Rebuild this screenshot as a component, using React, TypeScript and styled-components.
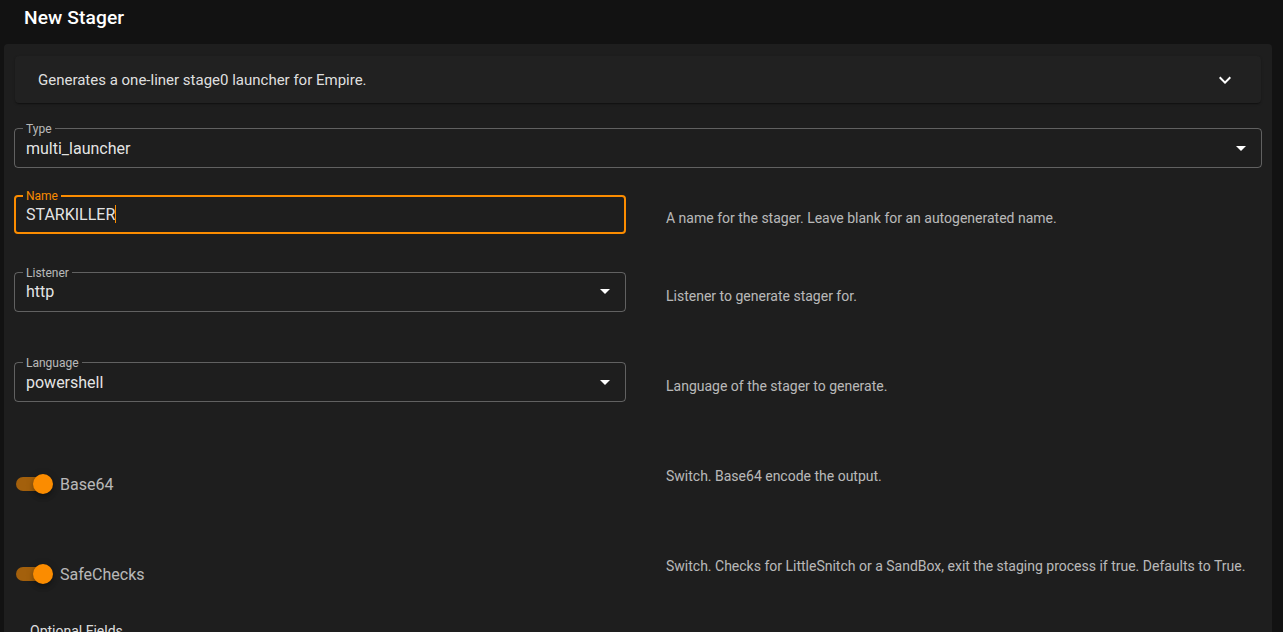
import React from 'react';
import styled, {createGlobalStyle} from 'styled-components';

const orange = '#fb8c00';

const GlobalStyle = createGlobalStyle`
    html, body {
        margin: 0;
        padding: 0;
        background: #121212;
        font-family: Roboto, "Liberation Sans", sans-serif;
        color: #fff;
        overflow: hidden;
    }
`;

const Page = styled.div`
    width: 1283px;
    height: 632px;
    background: #121212;
    overflow: hidden;
`;

const TopBar = styled.header`
    height: 44px;
    display: flex;
    align-items: center;
    padding: 0 24px;
    box-sizing: border-box;
`;

const Title = styled.h1`
    margin: 0;
    font-size: 19.2px;
    font-weight: 500;
    letter-spacing: 0.1px;
    color: #fff;
    padding-bottom: 10px;
`;

const Card = styled.section`
    margin-left: 4px;
    width: 1268px;
    min-height: 600px;
    background: #1e1e1e;
    border-radius: 4px 4px 0 0;
    padding: 12px 10px 0;
    box-sizing: border-box;
`;

const Panel = styled.div`
    margin: 0 1px;
    height: 47px;
    background: #212121;
    border-radius: 4px;
    box-shadow: 0 2px 1px -1px rgba(0, 0, 0, 0.2), 0 1px 1px 0 rgba(0, 0, 0, 0.14), 0 1px 3px 0 rgba(0, 0, 0, 0.12);
    display: flex;
    align-items: center;
    justify-content: space-between;
    padding: 0 30px 0 23px;
    box-sizing: border-box;
`;

const PanelText = styled.span`
    font-size: 15px;
    color: rgba(255, 255, 255, 0.87);
`;

const Field = styled.div<{ $focused?: boolean; $width?: string }>`
    position: relative;
    width: ${p => p.$width || '100%'};
    height: ${p => (p.$focused ? '39px' : '40px')};
    border: ${p => (p.$focused ? `2px solid ${orange}` : '1px solid rgba(255, 255, 255, 0.3)')};
    border-radius: 4px;
    box-sizing: border-box;
    display: flex;
    align-items: center;
    padding: ${p => (p.$focused ? '0 14px 0 10px' : '0 15px 0 11px')};
`;

const FieldLabel = styled.label<{ $focused?: boolean }>`
    position: absolute;
    top: ${p => (p.$focused ? '-8px' : '-7px')};
    left: ${p => (p.$focused ? '7px' : '8px')};
    padding: 0 3px;
    background: #1e1e1e;
    font-size: 12px;
    line-height: 14px;
    color: ${p => (p.$focused ? orange : 'rgba(255, 255, 255, 0.7)')};
`;

const FieldValue = styled.span`
    flex: 1;
    font-size: 16px;
    color: rgba(255, 255, 255, 0.9);
    white-space: nowrap;
`;

const Caret = styled.span`
    display: inline-block;
    width: 1px;
    height: 18px;
    background: ${orange};
    vertical-align: -3px;
`;

const TypeRow = styled.div`
    margin-top: 25px;
`;

const Row = styled.div<{ $height: number }>`
    display: grid;
    grid-template-columns: 612px 1fr;
    column-gap: 40px;
    align-items: center;
    height: ${p => p.$height}px;
`;

const Hint = styled.p<{ $shift?: number }>`
    margin: 0;
    font-size: 14px;
    color: rgba(255, 255, 255, 0.7);
    transform: translateY(${p => p.$shift || 0}px);
`;

const SwitchWrap = styled.label<{ $shift?: number }>`
    display: flex;
    align-items: center;
    gap: 8px;
    padding-left: 2px;
    transform: translateY(${p => p.$shift || 0}px);
`;

const Track = styled.span`
    position: relative;
    width: 36px;
    height: 14px;
    border-radius: 7px;
    background: rgba(251, 140, 0, 0.6);
`;

const Thumb = styled.span`
    position: absolute;
    right: -1px;
    top: -3px;
    width: 20px;
    height: 20px;
    border-radius: 50%;
    background: ${orange};
    box-shadow: 0 2px 4px -1px rgba(0, 0, 0, 0.2), 0 4px 5px 0 rgba(0, 0, 0, 0.14), 0 1px 10px 0 rgba(0, 0, 0, 0.12);
`;

const SwitchLabel = styled.span`
    font-size: 16px;
    color: rgba(255, 255, 255, 0.7);
`;

const Optional = styled.div`
    padding: 2px 0 0 16px;
    font-size: 14px;
    color: rgba(255, 255, 255, 0.87);
`;

const Arrow = () => (
    <svg width="10" height="5" viewBox="0 0 10 5"><path d="M0 0 L5 5 L10 0 Z" fill="#fff"/></svg>
);

const Chevron = () => (
    <svg width="12" height="8" viewBox="0 0 12 8">
        <path d="M1.4 0.6 L6 5.2 L10.6 0.6 L12 2 L6 8 L0 2 Z" fill="#fff"/>
    </svg>
);

const Select = ({label, value, width}: { label: string; value: string; width?: string }) => (
    <Field $width={width}>
        <FieldLabel>{label}</FieldLabel>
        <FieldValue>{value}</FieldValue>
        <Arrow/>
    </Field>
);

const Toggle = ({label, shift}: { label: string; shift?: number }) => (
    <SwitchWrap $shift={shift}>
        <Track><Thumb/></Track>
        <SwitchLabel>{label}</SwitchLabel>
    </SwitchWrap>
);

export default function App() {
    return (
        <Page>
            <GlobalStyle/>
            <TopBar>
                <Title>New Stager</Title>
            </TopBar>
            <Card>
                <Panel>
                    <PanelText>Generates a one-liner stage0 launcher for Empire.</PanelText>
                    <Chevron/>
                </Panel>
                <TypeRow>
                    <Select label="Type" value="multi_launcher"/>
                </TypeRow>
                <Row $height={92}>
                    <Field $focused>
                        <FieldLabel $focused>Name</FieldLabel>
                        <FieldValue>STARKILLER<Caret/></FieldValue>
                    </Field>
                    <Hint $shift={4}>A name for the stager. Leave blank for an autogenerated name.</Hint>
                </Row>
                <Row $height={63}>
                    <Select label="Listener" value="http"/>
                    <Hint $shift={4}>Listener to generate stager for.</Hint>
                </Row>
                <Row $height={118}>
                    <Select label="Language" value="powershell"/>
                    <Hint $shift={4}>Language of the stager to generate.</Hint>
                </Row>
                <Row $height={70}>
                    <Toggle label="Base64" shift={8}/>
                    <Hint>Switch. Base64 encode the output.</Hint>
                </Row>
                <Row $height={110}>
                    <Toggle label="SafeChecks" shift={8}/>
                    <Hint>Switch. Checks for LittleSnitch or a SandBox, exit the staging process if true. Defaults to True.</Hint>
                </Row>
                <Optional>Optional Fields</Optional>
            </Card>
        </Page>
    );
}
